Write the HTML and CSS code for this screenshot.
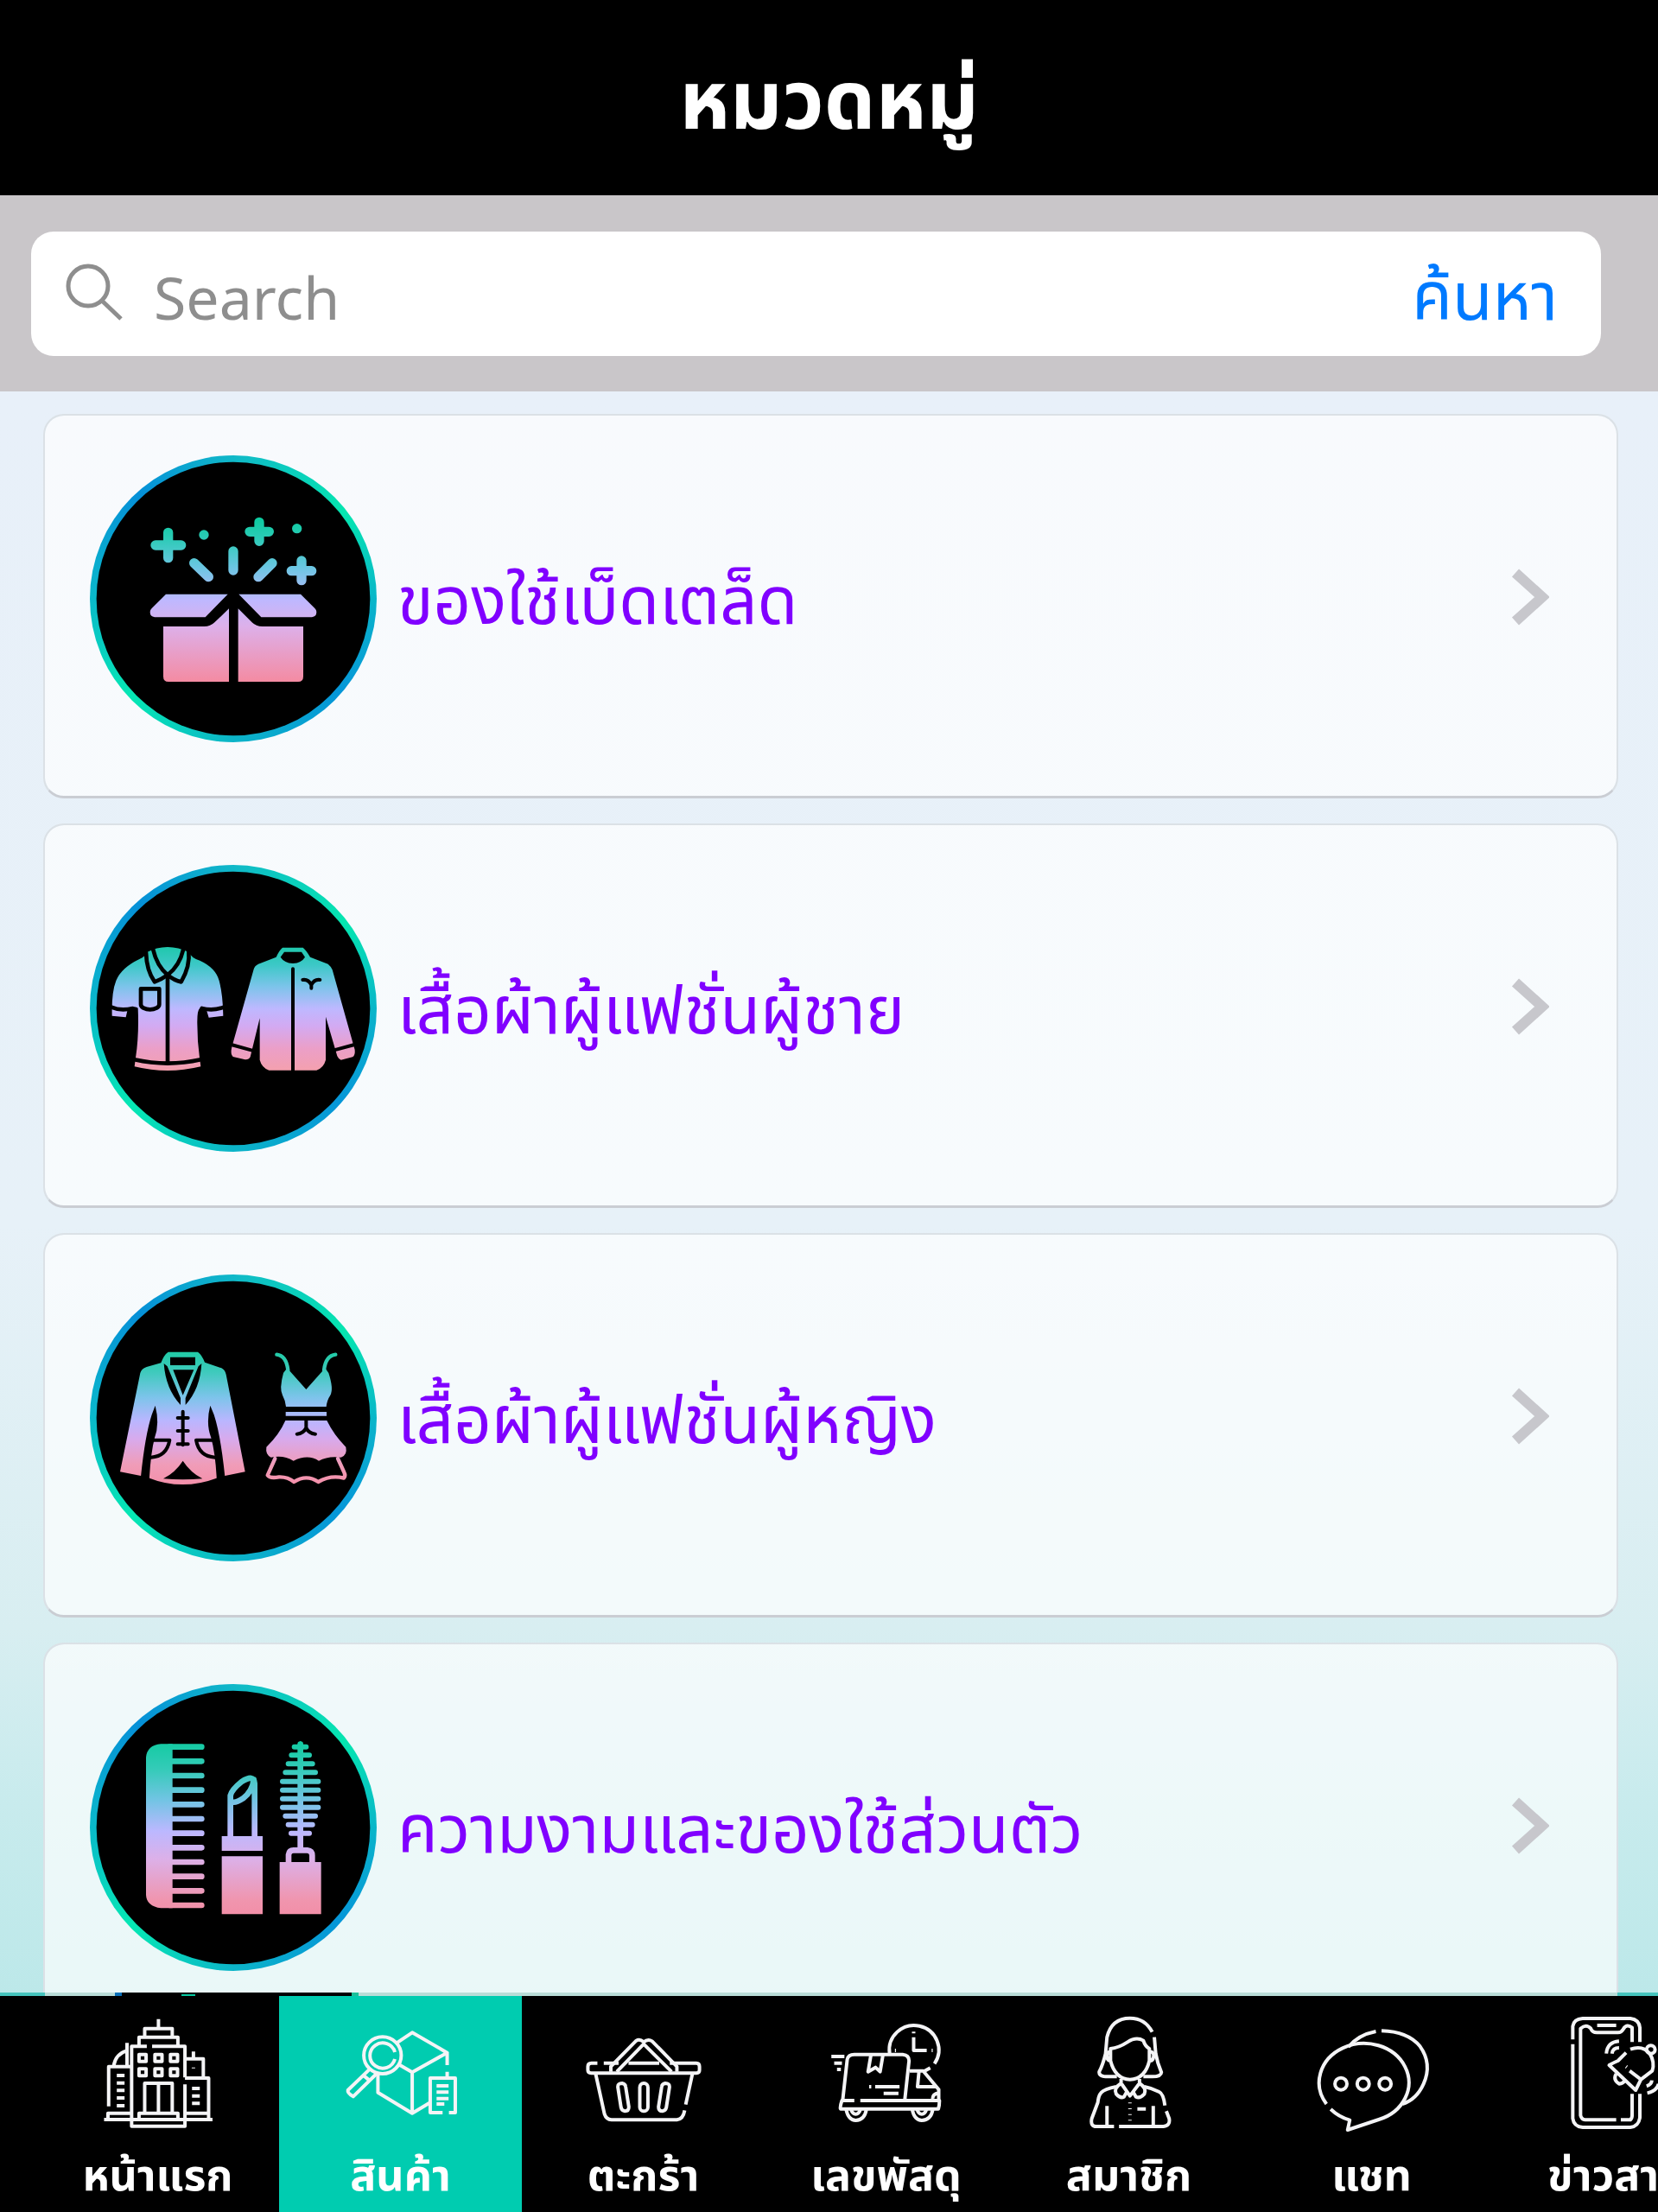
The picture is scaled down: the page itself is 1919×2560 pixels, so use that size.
FILE: index.html
```html
<!DOCTYPE html>
<html lang="th">
<head>
    <meta charset="UTF-8">
    <meta name="viewport" content="width=device-width, initial-scale=1.0">
    <title>หมวดหมู่</title>
    <link rel="stylesheet" href="styles.css">
</head>
<body>

    <header class="header">
        <h1>หมวดหมู่</h1>
    </header>

    <form class="search-bar">
        <div class="search-box">
            <label for="search" aria-label="Search">
                <svg class="search-icon" viewBox="0 0 66 66">
                    <circle cx="26" cy="26" r="23"/>
                    <path d="M42 43L64 64"/>
                </svg>
            </label>
            <input type="text" id="search" placeholder="Search">
            <button type="button">ค้นหา</button>
        </div>
    </form>

    <main class="category-list">

        <!-- General goods -->
        <a class="category" href="#">
            <span class="category-icon">
                <svg viewBox="43 52 996 996">
                    <defs>
                        <linearGradient id="g1" gradientUnits="userSpaceOnUse" x1="0" y1="270" x2="0" y2="838">
                            <stop offset="0" stop-color="#0ccba0"/>
                            <stop offset="0.12" stop-color="#2bcbb6"/>
                            <stop offset="0.3" stop-color="#6bc6e2"/>
                            <stop offset="0.5" stop-color="#beb8ff"/>
                            <stop offset="0.66" stop-color="#ddb0ea"/>
                            <stop offset="1" stop-color="#f48ba2"/>
                        </linearGradient>
                    </defs>
                    <circle class="disc" cx="541" cy="550" r="475"/>
                    <path class="line" stroke="url(#g1)" stroke-width="34" d="M315 320V408M271 364H360M631 284V350M598 317H665M778 418V486M743 453H813M541 385V451M405 426L455 474M676 426L628 474"/>
                    <g fill="url(#g1)">
                        <circle cx="439" cy="328" r="17"/>
                        <circle cx="762" cy="306" r="17"/>
                        <path d="M307 534H522L444 614H268Q252 612 252 596Q252 588 258 583Z"/>
                        <path d="M775 534H560L638 614H814Q830 612 830 596Q830 588 824 583Z"/>
                        <path d="M298 646H440Q462 646 476 632L526 584V838H316Q298 838 298 820Z"/>
                        <path d="M784 646H642Q620 646 606 632L558 584V838H766Q784 838 784 820Z"/>
                    </g>
                </svg>
            </span>
            <span class="category-name">ของใช้เบ็ดเตล็ด</span>
            <svg class="chevron" viewBox="0 0 44 66"><path d="M5 5L36 33L5 61"/></svg>
        </a>

        <!-- Men -->
        <a class="category" href="#">
            <span class="category-icon">
                <svg viewBox="43 48 996 996">
                    <defs>
                        <linearGradient id="g2" gradientUnits="userSpaceOnUse" x1="0" y1="333" x2="0" y2="762">
                            <stop offset="0" stop-color="#1fc8ac"/>
                            <stop offset="0.15" stop-color="#3ec8c8"/>
                            <stop offset="0.32" stop-color="#7cc4ea"/>
                            <stop offset="0.5" stop-color="#beb8ff"/>
                            <stop offset="0.64" stop-color="#d3aaf2"/>
                            <stop offset="0.82" stop-color="#eb9fc8"/>
                            <stop offset="1" stop-color="#f4a0ae"/>
                        </linearGradient>
                    </defs>
                    <circle class="disc" cx="541" cy="546" r="475"/>
                    <path fill="url(#g2)" d="M240 352Q275 333 313 333Q350 333 388 352Q395 372 425 380Q480 405 492 450Q505 500 506 572L456 578L448 552Q436 535 425 545Q415 552 416 600Q416 660 424 718L428 748Q370 762 313 762Q255 762 198 748L202 718Q214 640 210 545Q205 540 190 540L175 546L168 577L120 572Q118 490 134 450Q152 405 215 375Q238 365 240 352Z"/>
                    <g class="cut" stroke-width="14">
                        <path d="M118 542Q150 556 192 546M432 546Q470 556 508 542M198 724Q313 750 428 724M313 430V735"/>
                        <path d="M262 340Q276 400 313 430Q354 400 368 340M238 352Q240 415 268 454Q292 445 313 430Q336 450 360 454Q392 400 386 346"/>
                        <path d="M220 478H284V532Q284 540 276 544Q252 556 228 544Q220 540 220 532Z"/>
                    </g>
                    <path fill="url(#g2)" d="M712 335H783Q795 345 808 368L870 392Q880 400 885 412L963 690Q965 710 955 715L915 725Q905 720 902 712L862 575V725Q855 752 830 761H665Q640 752 633 725V580L600 715Q595 725 582 724L540 714Q530 705 536 680L612 410Q615 398 628 392L690 368Q700 345 712 335Z"/>
                    <path d="M718 350H778L790 368Q778 388 748 390Q718 388 705 368Z"/>
                    <g class="cut" stroke-width="12">
                        <path d="M748 409V766"/>
                        <path d="M534 672L606 692M888 692L962 672M782 447Q802 444 812 465Q822 444 842 447M812 460V476"/>
                    </g>
                </svg>
            </span>
            <span class="category-name">เสื้อผ้าผู้แฟชั่นผู้ชาย</span>
            <svg class="chevron" viewBox="0 0 44 66"><path d="M5 5L36 33L5 61"/></svg>
        </a>

        <!-- Women -->
        <a class="category" href="#">
            <span class="category-icon">
                <svg viewBox="43 43 996 996">
                    <defs>
                        <linearGradient id="g3" gradientUnits="userSpaceOnUse" x1="0" y1="312" x2="0" y2="772">
                            <stop offset="0" stop-color="#20cba6"/>
                            <stop offset="0.15" stop-color="#3ecabc"/>
                            <stop offset="0.34" stop-color="#7cc4ea"/>
                            <stop offset="0.52" stop-color="#bab6ff"/>
                            <stop offset="0.66" stop-color="#d8aaec"/>
                            <stop offset="0.85" stop-color="#f09cb8"/>
                            <stop offset="1" stop-color="#f490aa"/>
                        </linearGradient>
                    </defs>
                    <circle class="disc" cx="541" cy="541" r="475"/>
                    <path fill="url(#g3)" d="M315 312H418Q432 322 442 348L500 368Q512 374 516 390L582 728L512 742L483 745V750Q425 772 365 772Q305 772 250 750V742H220L148 728L218 385Q222 370 240 364L290 350Q300 322 315 312Z"/>
                    <path d="M270 498Q286 560 268 610Q255 660 250 745H220Q235 600 258 530Z"/>
                    <path d="M461 498Q445 560 464 610Q478 660 483 745H512Q497 600 474 530Z"/>
                    <path d="M322 330H409V358H322ZM332 374H404L366 462Z"/>
                    <path d="M300 352Q306 440 358 496V472L312 362ZM431 352Q426 440 375 496V472L420 362Z"/>
                    <path d="M366 690Q340 730 298 752Q366 758 434 752Q392 730 366 690Z"/>
                    <g class="cut" stroke-width="12">
                        <path d="M366 519V635M348 541H384M348 586H384M348 632H384"/>
                        <path d="M262 618H320Q310 675 255 678M472 618H412Q422 675 478 678"/>
                    </g>
                    <path class="line" stroke="url(#g3)" stroke-width="13" d="M692 321Q725 325 731 375M896 321Q862 325 856 375M686 682L660 740Q668 752 700 746Q730 745 752 763Q795 735 836 763Q880 738 925 750Q932 742 926 730L904 682"/>
                    <g fill="url(#g3)">
                        <path d="M728 368L794 442L860 368L872 385Q890 440 878 462Q866 480 864 502H724Q722 480 712 462Q700 440 715 385Z"/>
                        <path d="M723 520H865V534H723Z"/>
                        <path d="M722 550H866Q890 600 932 642Q938 670 915 678Q870 672 838 690Q800 665 750 690Q715 668 672 678Q652 668 656 642Q700 600 722 550Z"/>
                    </g>
                    <path class="cut" stroke-width="12" d="M794 550V575Q785 595 762 597M794 575Q803 595 826 597"/>
                </svg>
            </span>
            <span class="category-name">เสื้อผ้าผู้แฟชั่นผู้หญิง</span>
            <svg class="chevron" viewBox="0 0 44 66"><path d="M5 5L36 33L5 61"/></svg>
        </a>

        <!-- Beauty -->
        <a class="category" href="#">
            <span class="category-icon">
                <svg viewBox="43 53 996 996">
                    <defs>
                        <linearGradient id="g4" gradientUnits="userSpaceOnUse" x1="0" y1="252" x2="0" y2="852">
                            <stop offset="0" stop-color="#12cba2"/>
                            <stop offset="0.16" stop-color="#34cbb8"/>
                            <stop offset="0.34" stop-color="#72c4e4"/>
                            <stop offset="0.52" stop-color="#bcb8ff"/>
                            <stop offset="0.68" stop-color="#dcb0e8"/>
                            <stop offset="0.92" stop-color="#f095ae"/>
                            <stop offset="1" stop-color="#f28fa8"/>
                        </linearGradient>
                    </defs>
                    <circle class="disc" cx="541" cy="551" r="475"/>
                    <g fill="url(#g4)">
                        <path d="M290 261H330V831H290Q240 825 238 785V308Q242 265 290 261Z"/>
                        <path d="M501 581H643V632H501ZM501 651H643V852H501Z"/>
                        <path d="M702 671H846V852H702ZM774 250L788 268H760Z"/>
                    </g>
                    <path class="line" stroke="url(#g4)" stroke-width="20" d="M320 271H431M320 321H431M320 371H431M320 421H431M320 471H431M320 521H431M320 571H431M320 621H431M320 671H431M320 721H431M320 771H431M320 821H431"/>
                    <path class="line" stroke="url(#g4)" stroke-width="20" d="M531 581V440Q535 420 570 392Q613 365 615 398V581M532 460Q545 470 575 450Q608 425 612 385"/>
                    <path class="line" stroke="url(#g4)" stroke-width="20" d="M733 671V645Q735 630 750 630H798Q815 632 815 648V671M774 262V625"/>
                    <path class="line" stroke="url(#g4)" stroke-width="18" d="M753 271H794M743 300H805M732 330H816M722 360H826M712 391H836M712 421H836M712 451H836M712 481H836M722 511H826M732 541H816M742 571H805"/>
                </svg>
            </span>
            <span class="category-name">ความงามและของใช้ส่วนตัว</span>
            <svg class="chevron" viewBox="0 0 44 66"><path d="M5 5L36 33L5 61"/></svg>
        </a>

    </main>

    <nav class="tab-bar">
        <a class="tab" href="#">
            <svg viewBox="286 127 318 390" preserveAspectRatio="none">
                <path d="M446 135V166M407 195V168H485V195M391 230V198H501V230M413 230H370V507H521V362M428 230H521V338"/>
                <path d="M391 258h20v24h-20zM436 258h20v24h-20zM480 258h20v24h-20zM391 308h20v24h-20zM436 308h20v24h-20zM480 308h20v24h-20z"/>
                <path d="M407 460V358H485V460M446 362V460M391 482V462H501V482M370 484H521"/>
                <path d="M370 300H305V438M319 298Q325 255 357 245M357 218V298M328 331H350M328 357H350M328 383H350M328 409H350M328 436H350M292 484H368M303 482V462H368"/>
                <path d="M521 340H588V482M521 462H586M521 484H599M523 273H573V338M545 248V272M545 303V306M541 376H563M541 402H563M541 428H563"/>
            </svg>
            <span>หน้าแรก</span>
        </a>
        <a class="tab active" href="#">
            <svg viewBox="978 127 318 390" preserveAspectRatio="none">
                <path d="M1125 218L1169 182L1268 252L1169 320L1130 292M1169 320V462M1072 325V390L1169 462L1218 426M1268 252V295M1268 318V338"/>
                <ellipse cx="1085" cy="261" rx="53" ry="64"/>
                <path d="M1120 250A36 44 0 1 0 1120 274M1052 305L987 382Q985 392 1002 404L1068 325M1030 330L1045 345"/>
                <path d="M1255 460H1220V340H1291V460H1273M1238 367H1272M1238 389H1272M1238 411H1272M1238 430H1260"/>
            </svg>
            <span>สินค้า</span>
        </a>
        <a class="tab" href="#">
            <svg viewBox="97 127 318 390" preserveAspectRatio="none">
                <path d="M125 288H108Q98 288 98 300V312Q98 322 108 323H405Q414 322 414 312V300Q414 288 405 288H330M143 288H185M213 288H300"/>
                <path d="M163 318V300L235 210Q245 203 256 215Q268 203 280 212L350 300V318M180 318L256 222L335 318"/>
                <path d="M120 325L145 465Q150 484 165 485H350Q368 482 372 452M394 325L375 432"/>
                <path d="M183 372Q182 358 195 358Q204 360 205 370L214 440Q214 455 203 455Q194 453 192 443ZM329 372Q330 358 317 358Q308 360 307 370L298 440Q298 455 309 455Q318 453 320 443Z"/>
                <rect x="245" y="358" width="23" height="97" rx="11" ry="14"/>
            </svg>
            <span>ตะกร้า</span>
        </a>
        <a class="tab" href="#">
            <svg viewBox="787 127 318 390" preserveAspectRatio="none">
                <path d="M790 265H827M798 288H820M806 310H817M822 418L835 275Q838 258 855 258H992Q1010 260 1010 280L998 415"/>
                <path d="M902 260L894 318L915 303L928 318L936 260M897 370H903M914 370H983M938 393H980"/>
                <path d="M855 418H820Q814 440 816 447H1093Q1096 435 1096 418H872M1012 315H1050L1094 380V415M1038 318L1034 370H1085M1094 392Q1076 396 1077 412"/>
                <path d="M832 450Q838 486 859 487Q884 486 889 450M1019 450Q1025 486 1046 487Q1072 486 1077 450M846 450Q850 465 859 465Q868 465 872 450M1033 450Q1037 465 1046 465Q1055 465 1059 450"/>
                <path d="M955 255A70 85 0 1 1 1082 290M1052 317L1070 305M1023 198V244H1060M1023 179V185M970 244H973M1074 244H1077"/>
            </svg>
            <span>เลขพัสดุ</span>
        </a>
        <a class="tab" href="#">
            <svg viewBox="-94 127 318 390" preserveAspectRatio="none">
                <path d="M130 180Q110 132 67 132Q15 132 2 198L-2 255Q-10 295 -20 318Q-22 335 5 335H30M136 198L140 255Q145 290 156 320Q155 335 130 335H105"/>
                <path d="M12 238Q35 235 60 215Q85 195 105 210Q110 230 122 238V280Q110 343 67 345Q25 343 12 280ZM12 248Q0 250 2 266Q4 280 12 280M124 248Q136 250 134 266Q132 280 124 280"/>
                <path d="M42 343V358L67 402L94 358V343M42 358Q20 375 28 395Q40 412 50 405L58 388M94 358Q115 375 108 395Q95 412 84 405L76 388"/>
                <path d="M28 370Q-5 378 -14 390Q-22 400 -24 425L-41 480Q-46 508 -28 508H22M36 508H162Q182 505 178 480L170 455M166 435Q162 395 150 388Q130 375 108 370M2 437V508M133 437V508M88 447H112"/>
                <path d="M67 425V428M67 445V448M67 465V468M67 485V488"/>
            </svg>
            <span>สมาชิก</span>
        </a>
        <a class="tab" href="#">
            <svg viewBox="600 127 318 390" preserveAspectRatio="none">
                <path d="M692 232Q720 190 770 178M786 176Q860 178 895 230Q930 290 905 360Q885 415 845 430"/>
                <path d="M630 430A127 136 0 1 1 778 484L690 520L696 486Q665 475 642 448"/>
                <ellipse cx="671" cy="360" rx="17" ry="21"/>
                <ellipse cx="734" cy="360" rx="17" ry="21"/>
                <ellipse cx="796" cy="360" rx="17" ry="21"/>
            </svg>
            <span>แชท</span>
        </a>
        <a class="tab" href="#">
            <svg viewBox="1287 127 318 390" preserveAspectRatio="none">
                <path d="M1327 206V160Q1330 135 1355 133H1490Q1515 137 1517 165V215M1517 395V478Q1513 508 1490 511H1355Q1330 508 1327 480V222"/>
                <path d="M1495 215V165Q1480 150 1470 170Q1465 182 1455 182H1395Q1382 182 1378 168Q1365 150 1349 168V470Q1352 484 1362 485H1450M1463 485H1490Q1495 480 1495 470V395M1396 157H1450"/>
                <path d="M1490 240Q1525 225 1545 255Q1560 285 1552 315L1520 345L1505 382L1430 295Q1445 285 1455 280L1478 252M1478 300L1480 302M1488 315L1520 345"/>
                <ellipse cx="1548" cy="241" rx="12" ry="14"/>
                <path d="M1450 325Q1440 345 1458 360Q1470 358 1473 350M1422 255Q1425 215 1458 212M1438 255Q1440 235 1458 235M1536 368Q1550 362 1551 348M1538 392Q1565 385 1570 360"/>
            </svg>
            <span>ข่าวสาร</span>
        </a>
    </nav>

</body>
</html>
```

FILE: styles.css
```css
* {
    box-sizing: border-box;
}
body {
    margin: 0;
    height: 100vh;
    display: flex;
    flex-direction: column;
    overflow: hidden;
    font-family: "Noto Sans", "Noto Sans Thai", Tahoma, sans-serif;
    background-color: #e8f0f9;
}
.header {
    flex: none;
    height: 226px;
    display: flex;
    align-items: center;
    justify-content: center;
    background-color: #000;
    color: white;
}
.header h1 {
    margin: 0;
    font-size: 94px;
    line-height: 120px;
}

/* Search */
.search-bar {
    flex: none;
    padding: 42px 66px 41px 36px;
    background-color: #c9c6c9;
}
.search-box {
    height: 144px;
    display: flex;
    align-items: baseline;
    padding: 0 50px 0 40px;
    background: white;
    border-radius: 26px;
}
.search-box label {
    align-self: center;
}
.search-icon {
    display: block;
    width: 66px;
    height: 66px;
    margin-bottom: 4px;
    fill: none;
    stroke: #8e8e8e;
    stroke-width: 5;
}
.search-box input {
    flex: 1;
    min-width: 0;
    height: 144px;
    padding: 6px 0 0 36px;
    border: none;
    outline: none;
    background: none;
    font-family: inherit;
    font-size: 68px;
}
.search-box input::placeholder {
    color: #8e8e8e;
    opacity: 1;
}
.search-box button {
    padding: 0;
    border: none;
    background: none;
    color: #007aff;
    font-family: inherit;
    font-size: 76px;
    line-height: 100px;
    cursor: pointer;
}

/* Category list */
.category-list {
    flex: 1;
    min-height: 0;
    overflow: hidden;
    display: flex;
    flex-direction: column;
    gap: 29px;
    padding: 26px 46px 0 50px;
    background: linear-gradient(#e8f0f9 0%, #e7f1f8 52%, #d8eef1 77%, #c8ebed 88%, #bce8e9 100%);
}
.category {
    flex: none;
    display: flex;
    align-items: center;
    padding: 46px 78px 62px 52px;
    border: 2px solid #dbe1e6;
    border-bottom: 3px solid #cacdd3;
    border-radius: 24px;
    background-color: rgba(255, 255, 255, 0.68);
    background-clip: padding-box;
    color: #8000ff;
    text-decoration: none;
}
.category-icon {
    width: 332px;
    height: 332px;
    border-radius: 50%;
    background: conic-gradient(#10b8c8, #05e6b0 52deg, #0ab0cc 95deg, #0596d8 132deg, #0cb4c8 180deg, #05e8b4 226deg, #0ab4cc 275deg, #0590d8 318deg, #10b8c8);
}
.category-icon svg {
    display: block;
}
.category-name {
    flex: 1;
    padding-left: 24px;
    font-size: 76px;
    line-height: 100px;
}
.chevron {
    width: 44px;
    height: 66px;
    margin-bottom: 4px;
    fill: none;
    stroke: #c7c7cc;
    stroke-width: 12;
}
.disc {
    fill: #000;
}
.line {
    fill: none;
    stroke-linecap: round;
    stroke-linejoin: round;
}
.cut {
    fill: none;
    stroke: #000;
    stroke-linecap: round;
    stroke-linejoin: round;
}

/* Bottom tabs */
.tab-bar {
    position: relative;
    flex: none;
    height: 250px;
    display: flex;
    padding-left: 42px;
    background-color: #000;
}
/* Next row showing just above the tabs */
.tab-bar::before {
    content: "";
    position: absolute;
    left: 0;
    right: 0;
    top: -4px;
    height: 4px;
    background:
        linear-gradient(#05c8a0, #05c8a0) 210px 2px / 16px 2px no-repeat,
        linear-gradient(90deg, #0a70b8 8px, #000 8px, #000 274px, #1bc09a 274px) 133px 0 / 282px 4px no-repeat,
        linear-gradient(90deg, #45c4bd 52px, #b9ddd8 52px, #b9ddd8 calc(100% - 47px), #45c4bd calc(100% - 47px));
}
.tab {
    flex: 0 0 281px;
    display: flex;
    flex-direction: column;
    align-items: center;
    gap: 16px;
    padding-top: 24px;
    color: white;
    font-size: 50px;
    font-weight: bold;
    line-height: 72px;
    text-decoration: none;
}
.tab.active {
    background-color: #00ccb0;
}
.tab svg {
    width: 130px;
    height: 130px;
    overflow: visible;
    fill: none;
    stroke: #f4f4f6;
    stroke-width: 4;
    stroke-linejoin: round;
}
.tab svg * {
    vector-effect: non-scaling-stroke;
}
```
